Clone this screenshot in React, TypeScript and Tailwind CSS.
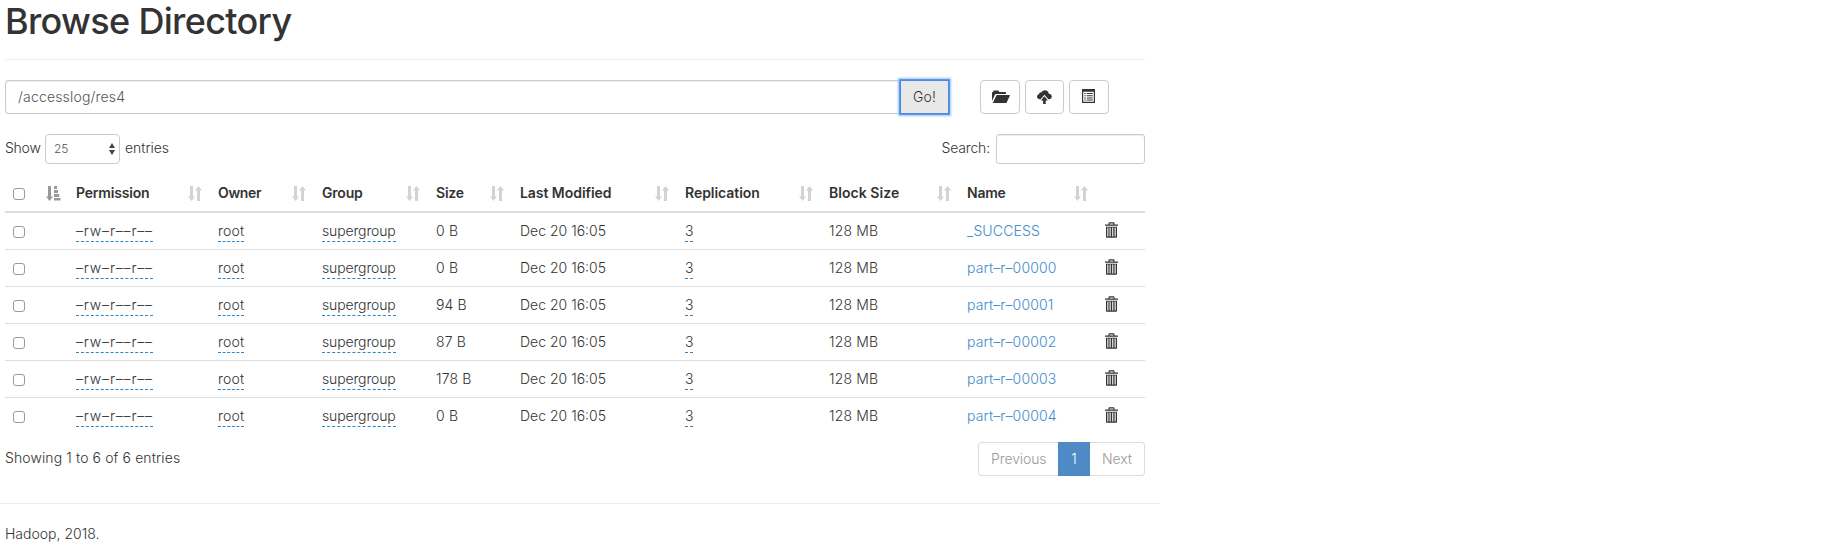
import React from "react";

type Column = { label: string; width: string; tracking: string };

const columns: Column[] = [
  { label: "Permission", width: "w-[142px]", tracking: "tracking-[-0.19px]" },
  { label: "Owner", width: "w-[104px]", tracking: "tracking-[-0.35px]" },
  { label: "Group", width: "w-[114px]", tracking: "tracking-[-0.2px]" },
  { label: "Size", width: "w-[84px]", tracking: "tracking-[-0.2px]" },
  { label: "Last Modified", width: "w-[165px]", tracking: "tracking-[-0.05px]" },
  { label: "Replication", width: "w-[144px]", tracking: "tracking-[-0.05px]" },
  { label: "Block Size", width: "w-[138px]", tracking: "tracking-[0.05px]" },
  { label: "Name", width: "w-[137px]", tracking: "tracking-[-0.25px]" },
];

const files = [
  { name: "_SUCCESS", size: "0 B" },
  { name: "part–r–00000", size: "0 B" },
  { name: "part–r–00001", size: "94 B" },
  { name: "part–r–00002", size: "87 B" },
  { name: "part–r–00003", size: "178 B" },
  { name: "part–r–00004", size: "0 B" },
];

function SortIcon() {
  return (
    <svg className="block h-[15px] w-[14px] shrink-0 text-[#d3d3d3]" viewBox="0 0 14 15" fill="currentColor">
      <path d="M2 0h3v10.5h2L3.5 15 0 10.5h2z" />
      <path d="M9 15h3V4.5h2L10.5 0 7 4.5h2z" />
    </svg>
  );
}

function SortAscIcon() {
  return (
    <svg className="block h-[15px] w-[15px] shrink-0 text-[#999]" viewBox="0 0 15 15" fill="currentColor">
      <path d="M2 0h3v10.5h2L3.5 15 0 10.5h2z" />
      <path d="M8 0h3v3H8zM8 4h4v3H8zM8 8h5.2v3H8zM8 12h6.5v2.6H8z" />
    </svg>
  );
}

function FolderOpenIcon() {
  return (
    <svg className="block h-[14px] w-[18px] translate-x-px" viewBox="0 0 18 14" fill="currentColor">
      <path d="M0 11V2.2L1 2l.8-1.4h4.4L7.4 2h5.8c.5 0 .8.3.8.8V4H4.200c-.6 0-1 .2-1.300.8z" />
      <path d="M4.6 5h12.8c.4 0 .6.300.4.800l-3.100 6.700c-.2.400-.4.500-.8.500H.8z" />
    </svg>
  );
}

function CloudUploadIcon() {
  return (
    <svg className="block h-[15px] w-[15px]" viewBox="0 0 15 15" fill="currentColor">
      <path d="M3 9.300C1.300 9.300 0 8.300 0 6.800c0-1.400.9-2.300 2-2.500C2 2.900 3.200 2 4.500 2.200 5.200.9 6.400.2 7.900.2c2.200 0 3.800 1.600 3.900 3.600 1.700 0 3 1.100 3 2.800 0 1.600-1.200 2.700-2.800 2.700h-.6L7.400 4.700 3.600 9.300z" />
      <path d="M7.400 6.300l3.500 4.200H8.700V14H6.100v-3.500H3.900z" />
    </svg>
  );
}

function ListAltIcon() {
  return (
    <svg className="block h-[14px] w-[13px] -translate-y-px" viewBox="0 0 13 14" fill="currentColor">
      <path fillRule="evenodd" d="M0 0h13v14H0zM1.200 2.700v10.100h10.600V2.700z" />
      <path d="M2.300 4h1.400v1H2.300zM4.700 4h6v1h-6zM2.300 6.200h1.400v1H2.300zM4.700 6.200h6v1h-6zM2.300 8.400h1.400v1H2.300zM4.700 8.400h6v1h-6zM2.300 10.600h1.400v1H2.300zM4.700 10.600h6v1h-6z" />
    </svg>
  );
}

function TrashIcon() {
  return (
    <svg className="block h-[16px] w-[13px]" viewBox="0 0 13 16" fill="currentColor">
      <path fillRule="evenodd" d="M0 2.500h3.500V1.200c0-.6.400-.9.900-.9h4.200c.5 0 .9.300.9.900v1.300H13v1.300H0zM4.600 1.400v1.100h3.800V1.400z" />
      <path fillRule="evenodd" d="M1 4.800h11v10c0 .6-.4 1-1 1H2c-.6 0-1-.4-1-1zM2.300 5.600v8.900h1.100V5.600zM4.600 5.600v8.900h1.100V5.600zM7.200 5.600v8.900h1.100V5.600zM9.600 5.600v8.900h1.100V5.600z" />
    </svg>
  );
}

function Checkbox() {
  return (
    <input
      type="checkbox"
      className="mt-[5px] block h-[12px] w-[12px] shrink-0 appearance-none rounded-[3px] border border-[#999] bg-white"
    />
  );
}

function Editable({ children, className = "" }: { children: React.ReactNode; className?: string }) {
  return (
    <span className={`inline-block border-b border-dashed border-[#2a86c8] align-top ${className}`}>{children}</span>
  );
}

function IconButton({ children }: { children: React.ReactNode }) {
  return (
    <button className="flex h-[34px] w-[39.5px] items-center justify-center rounded-[4px] border border-[#ccc] bg-white">
      {children}
    </button>
  );
}

export default function App() {
  return (
    <div className="min-h-[556px] bg-white font-['Inter','Liberation_Sans',sans-serif] text-[14px] leading-[20px] font-[360] text-[#333]">
      <div className="ml-[5px] w-[1140px]">
        <header className="h-[60px] border-b border-[#eee] pt-[1px]">
          <h1 className="text-[36px] leading-[40px] font-medium tracking-[-0.66px]">Browse Directory</h1>
        </header>

        <div className="flex pt-[20px]">
          <div className="flex h-[34px] w-[944px]">
            <input
              type="text"
              defaultValue="/accesslog/res4"
              className="h-[34px] min-w-0 flex-1 rounded-l-[4px] border border-r-0 border-[#ccc] px-[12px] pb-[2px] tracking-[0.17px] text-[#555] shadow-[inset_0_1px_1px_rgba(0,0,0,0.075)] outline-none"
            />
            <button className="z-10 h-[34px] w-[49px] border border-[#4a8ae0] bg-[#e8e8e8] tracking-[0.1px] shadow-[0_0_0_1px_#5b98ea,0_0_2px_2px_#9cc4f8]">
              Go!
            </button>
          </div>
          <div className="ml-[31px] flex gap-[5px]">
            <IconButton><FolderOpenIcon /></IconButton>
            <IconButton><CloudUploadIcon /></IconButton>
            <IconButton><ListAltIcon /></IconButton>
          </div>
        </div>

        <div className="flex items-center justify-between pt-[20px]">
          <label className="flex items-center">
            <span className="w-[40px] -translate-y-px tracking-[-0.25px]">Show</span>
            <span className="flex h-[30px] w-[75px] items-center justify-between rounded-[4px] border border-[#ccc] pr-[4px] pl-[8px] text-[12px] text-[#555]">
              25
              <svg className="h-[12px] w-[6px]" viewBox="0 0 6 12" fill="#444">
                <path d="M3 0l3 5H0zM3 12L0 7h6z" />
              </svg>
            </span>
            <span className="ml-[5px] -translate-y-px tracking-[-0.05px]">entries</span>
          </label>
          <label className="flex items-center">
            <span className="-translate-y-px tracking-[-0.15px]">Search:</span>
            <input
              type="search"
              className="ml-[6px] h-[30px] w-[149px] rounded-[3px] border border-[#ccc] shadow-[inset_0_1px_1px_rgba(0,0,0,0.075)]"
            />
          </label>
        </div>

        <table className="mt-[11px] w-[1140px] table-fixed border-separate border-spacing-0">
          <thead>
            <tr>
              <th className="h-[38px] w-[63px] border-b-2 border-[#ddd] px-[8px] pt-[8px] pb-[7px] align-top">
                <div className="flex h-[20px] justify-between">
                  <Checkbox />
                  <span className="-mr-px pt-[3px]"><SortAscIcon /></span>
                </div>
              </th>
              {columns.map((c) => (
                <th
                  key={c.label}
                  className={`h-[38px] border-b-2 border-[#ddd] px-[8px] pt-[8px] pb-[7px] text-left align-top font-semibold whitespace-nowrap ${c.width}`}
                >
                  <div className="flex h-[20px] justify-between">
                    <span className={c.tracking}>{c.label}</span>
                    <span className="pt-[3px]"><SortIcon /></span>
                  </div>
                </th>
              ))}
              <th className="w-[49px] border-b-2 border-[#ddd]" />
            </tr>
          </thead>
          <tbody className="[&_td]:h-[37px] [&_td]:border-t [&_td]:border-[#ddd] [&_td]:px-[8px] [&_td]:pt-[8px] [&_td]:pb-[7px] [&_td]:align-top [&_td]:whitespace-nowrap [&_tr:first-child_td]:h-[36px] [&_tr:first-child_td]:border-t-0">
            {files.map((f) => (
              <tr key={f.name}>
                <td><div className="h-[20px] overflow-hidden"><Checkbox /></div></td>
                <td><Editable className="tracking-[0.83px]">–rw–r––r––</Editable></td>
                <td><Editable className="tracking-[0.2px]">root</Editable></td>
                <td><Editable className="tracking-[-0.14px]">supergroup</Editable></td>
                <td className="tracking-[0.15px]">{f.size}</td>
                <td>Dec 20 16:05</td>
                <td><Editable className="w-[8px] tracking-[-0.5px]">3</Editable></td>
                <td className="tracking-[0.15px]">128 MB</td>
                <td className="tracking-[0.13px]"><a className="text-[#428bca]">{f.name}</a></td>
                <td><div className="h-[20px] pt-px pl-px"><TrashIcon /></div></td>
              </tr>
            ))}
          </tbody>
        </table>

        <div className="flex justify-between pt-[8px]">
          <div className="pt-[6px] tracking-[0.11px]">Showing 1 to 6 of 6 entries</div>
          <div className="flex h-[34px] text-[#999]">
            <span className="w-[80px] rounded-l-[4px] border border-r-0 border-[#ddd] pt-[6px] pl-[12px] tracking-[-0.1px]">Previous</span>
            <span className="w-[32px] bg-[#4d8ac6] pt-[7px] text-center text-white">1</span>
            <span className="w-[55px] rounded-r-[4px] border border-l-0 border-[#ddd] pt-[6px] pl-[12px] tracking-[-0.1px]">Next</span>
          </div>
        </div>
      </div>

      <footer className="mt-[27px] w-[1160px] border-t border-[#eee] pt-[20px] pl-[5px]">
        <p>Hadoop, 2018.</p>
      </footer>
    </div>
  );
}
